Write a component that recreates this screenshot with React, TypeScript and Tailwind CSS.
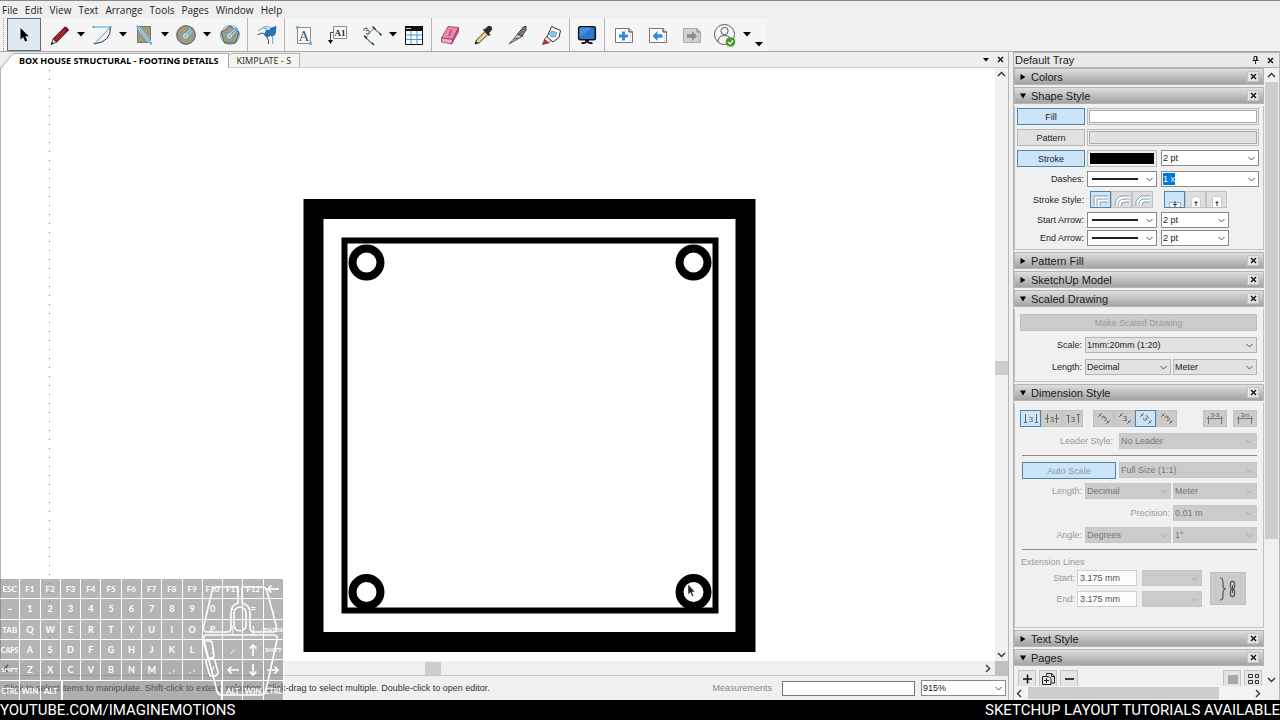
import React from 'react';
import clsx from 'clsx';

const menus = ['File', 'Edit', 'View', 'Text', 'Arrange', 'Tools', 'Pages', 'Window', 'Help'];

function Ico({ children, size = 26 }: { children: React.ReactNode; size?: number }) {
  return (
    <svg width={size} height={size} viewBox="0 0 26 26" fill="none" aria-hidden="true" className="shrink-0">
      {children}
    </svg>
  );
}

function Tool({ label, active, children }: { label: string; active?: boolean; children: React.ReactNode }) {
  return (
    <button
      aria-label={label}
      className={clsx(
        'flex w-[34px] shrink-0 items-center justify-center self-stretch',
        active && 'border border-[#5f6f7a] bg-[#dfe9f1]',
      )}
    >
      <Ico>{children}</Ico>
    </button>
  );
}

function Caret({ label }: { label: string }) {
  return (
    <button aria-label={label} className="flex w-2 shrink-0 items-center justify-center">
      <svg width="8" height="5" viewBox="0 0 8 5" aria-hidden="true">
        <path d="M0 0h8L4 4.6z" fill="#000" />
      </svg>
    </button>
  );
}

function Sep() {
  return <span className="w-px shrink-0 self-stretch bg-[#b4b4b4]" />;
}

function PageShape({ grey }: { grey?: boolean }) {
  return (
    <>
      <path d="M4.500 6.500h13.500l3.500 3.500v10.500h-17z" fill={grey ? '#d2d2d2' : '#fdfdfd'} stroke={grey ? '#aaa' : '#777'} />
      <path d="M18 6.500v3.500h3.500" stroke={grey ? '#888' : '#333'} fill={grey ? '#bbb' : '#eee'} />
      <path d="M19.500 12v7" stroke={grey ? '#aaa' : '#bbb'} strokeDasharray="1 1" />
    </>
  );
}

function CenterHandle() {
  return (
    <>
      <path d="M13 13.500l5.500-5.500" stroke="#d9f0ff" strokeWidth="2.600" />
      <path d="M13 13.500l6-6" stroke="#3f9ad4" strokeWidth="1.200" />
      <circle cx="12.500" cy="14" r="2" fill="#8fb4c4" stroke="#c9ecff" />
      <path d="M18.500 5.500h2v2h-2z" fill="#3f9ad4" />
    </>
  );
}

function Toolbar() {
  return (
    <div className="flex h-[34px] shrink-0 items-stretch border-b border-[#a6a6a6] bg-[#efefef]">
      <div className="flex items-stretch bg-[#f5f5f5] pl-[3px] pr-1">
        <span className="mr-[3px] w-px border-l border-dotted border-[#999]" />
        <Tool label="Select" active>
          <path d="M9.500 6v11.500l2.600-2.400 2 4.400 2.200-1-2-4.200h3.400z" fill="#000" />
        </Tool>
        <span className="w-0.5 shrink-0" />
        <Tool label="Line">
          <path d="M4 22.500l2.200-5.800 3.600 3.400z" fill="#e8cfa0" stroke="#333" strokeWidth=".8" />
          <path d="M6.200 16.700L17.800 5l3.600 3.200L9.800 20z" fill="#a8202e" stroke="#301014" strokeWidth=".9" />
          <path d="M16.500 6.400l3.500 3.300 1.800-1.600q-.6-3-3.600-3.500z" fill="#6b1a22" />
          <path d="M4 22.500l1-2.500 1.500 1.400z" fill="#111" />
        </Tool>
        <Caret label="Line options" />
        <Tool label="Arc">
          <path d="M4.500 5h17L6 21.500" stroke="#4aa5dc" />
          <path d="M21.500 5q.500 15-16 16.800" stroke="#333" />
          <path d="M3.500 4h2v2h-2zM20.500 4h2v2h-2zM4.500 20.500h2v2h-2z" fill="#4aa5dc" />
        </Tool>
        <Caret label="Arc options" />
        <Tool label="Rectangle">
          <path d="M6.500 4.500h13v16h-13z" fill="#9b9b87" stroke="#77776a" />
          <path d="M6.500 4.500l13.500 17" stroke="#d9f0ff" strokeWidth="2.600" />
          <path d="M6.500 4.500l13.500 17" stroke="#4aa5dc" strokeWidth="1.200" />
          <path d="M5.500 3.500h2v2h-2zM19 20.500h2v2h-2z" fill="#4aa5dc" />
        </Tool>
        <Caret label="Rectangle options" />
        <Tool label="Circle">
          <circle cx="13" cy="13" r="9.300" fill="#9b9b87" stroke="#55554c" />
          <CenterHandle />
        </Tool>
        <Caret label="Circle options" />
        <span className="w-0.5 shrink-0" />
        <Tool label="Polygon">
          <circle cx="13" cy="13" r="9.300" stroke="#4aa5dc" />
          <path d="M13 4l9 6.500-3.500 10.500h-11L4 10.500z" fill="#9b9b87" stroke="#55554c" />
          <CenterHandle />
        </Tool>
        <Sep />
        <span className="w-0.5 shrink-0" />
        <Tool label="Offset">
          <path d="M4 9q6-6 11 0t4 13M9 5q5-2 9 2" stroke="#4aa5dc" />
          <path d="M3.500 13q6-4 9 1t2 8" stroke="#444" />
          <path d="M10.500 13l2-5 2.500 1 1.500-2.500L22 4.500l-1 8-2.500 1.500-1.500-1-4 2z" fill="#2277c4" stroke="#134a80" strokeWidth=".7" />
        </Tool>
        <Sep />
        <span className="w-0.5 shrink-0" />
        <Tool label="Text">
          <path d="M6.500 5.500h13v16h-13z" stroke="#8a8a8a" fill="#fbfbfb" />
          <text x="13" y="19" textAnchor="middle" fontFamily="Liberation Serif, serif" fontSize="15" fill="#445866">A</text>
          <path d="M5 4h3v3H5zM18 20h3v3h-3z" fill="#6fb7e0" />
        </Tool>
        <Tool label="Label">
          <path d="M8.500 4.500h13v12h-13z" stroke="#8a8a8a" fill="#fbfbfb" />
          <text x="15" y="14" textAnchor="middle" fontFamily="Liberation Serif, serif" fontSize="9" fontWeight="bold" fill="#222">A1</text>
          <path d="M8 10.500H5.500V19" stroke="#444" />
          <path d="M3 18h5l-2.500 4z" fill="#111" />
        </Tool>
        <Tool label="Dimension">
          <path d="M6 15l7.500 7M14.500 6L22 12.500" stroke="#4b9e4b" strokeWidth="1.200" />
          <path d="M6.500 15.500l8.500-9.500" stroke="#666" strokeWidth=".8" />
          <path d="M5 13.500l3 3M13.500 4.500l3 3M13 21l2 2M20.500 11.500l2 2" stroke="#222" strokeWidth="1.200" />
          <text x="5" y="12" fontFamily="Liberation Sans, sans-serif" fontSize="10" fill="#444" transform="rotate(-42 8 9)">3</text>
        </Tool>
        <Caret label="Dimension options" />
        <Tool label="Table">
          <path d="M4.500 4.500h17v18h-17z" fill="#fff" stroke="#111" />
          <path d="M4 4h18v5H4z" fill="#111" />
          <path d="M5 6.500h5" stroke="#ccc" />
          <path d="M5 13h16M5 17.500h16M10 9v13M16 9v13" stroke="#3f9ae0" />
        </Tool>
        <Sep />
        <span className="w-px shrink-0" />
        <Tool label="Eraser">
          <path d="M11 4.500l10.500 1-5.500 12-11.500-1.500z" fill="#ee86b1" stroke="#8a3d5f" strokeWidth=".8" />
          <path d="M4.500 16l11.500 1.500-1.500 4.500L4.500 20z" fill="#f6a9ca" stroke="#8a3d5f" strokeWidth=".8" />
          <path d="M21.500 5.500v4.500l-7 12 1.500-4.500z" fill="#c85b8c" stroke="#8a3d5f" strokeWidth=".8" />
          <path d="M14.500 7.500l-2.500 6.500" stroke="#b34a7b" strokeWidth="1.500" />
        </Tool>
        <Tool label="Style">
          <path d="M4 22l1.500-4L14 9.500l3 3L8 21z" fill="#e9d27c" stroke="#333" strokeWidth=".9" />
          <path d="M4 22l1-3 2 2z" fill="#222" />
          <path d="M12 8l6 6 1.500-1.500-1.500-1.500 2.500-2.500q1.500-2.500-.300-4t-4 .3l-2.500 2.500-.700-.800z" fill="#2c2c2c" />
        </Tool>
        <Tool label="Split">
          <path d="M4 22L13 12l5 2z" fill="#c9c9c9" stroke="#444" strokeWidth=".9" />
          <path d="M12.500 12L19 4.500h2v3.500L17 14z" fill="#8a8a8a" stroke="#222" strokeWidth=".9" />
          <path d="M14.500 12.500l5-6.500M9 17l5-1" stroke="#444" strokeWidth=".8" />
        </Tool>
        <Tool label="Join">
          <path d="M12.500 4.500l9 4-1.500 7-6 4.500-6-5z" fill="#fafafa" stroke="#333" />
          <path d="M12.500 9l5 1.500-1 4-4 .500-2-2.500z" fill="#8cc8ea" stroke="#4787a8" strokeWidth=".7" />
          <path d="M7.500 14.500l4.500 4-2.500 2.500-4-3.500z" fill="#eee" stroke="#333" strokeWidth=".8" />
          <path d="M3.500 22.500l2-5 4 3.500z" fill="#c9302c" stroke="#611" strokeWidth=".6" />
        </Tool>
        <Sep />
        <Tool label="Start presentation">
          <path d="M11 18h4v2h3l1 2h-4.500v-1h-3v1H7l1-2h3z" fill="#1d1d1d" />
          <rect x="4.700" y="4.700" width="16.600" height="13" rx="1.500" fill="#2a78cf" stroke="#141414" strokeWidth="1.600" />
          <path d="M5.500 15.500L18 5.500H7Q5.500 5.500 5.500 7z" fill="#4391e2" />
        </Tool>
        <Sep />
        <span className="w-0.5 shrink-0" />
        <Tool label="Add page">
          <PageShape />
          <path d="M11 9.500h3v3h3v3h-3v3h-3v-3H8v-3h3z" fill="#2f8bdb" />
        </Tool>
        <Tool label="Previous page">
          <PageShape />
          <path d="M7.500 14l5-5v3.300h5v3.400h-5V19z" fill="#2f8bdb" />
        </Tool>
        <Tool label="Next page">
          <PageShape grey />
          <path d="M18 14l-5-5v3.300H8v3.400h5V19z" fill="#8b8b8b" />
        </Tool>
        <Tool label="Account">
          <circle cx="11.500" cy="12.500" r="10" stroke="#444" fill="#f8f8f8" strokeWidth=".9" />
          <circle cx="11.500" cy="9" r="3.600" stroke="#444" strokeWidth=".9" />
          <path d="M5 19.500q0-6 6.500-6t6.500 6" stroke="#444" strokeWidth=".9" />
          <circle cx="17.500" cy="20" r="4.800" fill="#4c9a2a" />
          <path d="M15.300 20.200l1.700 1.700 3-3.400" stroke="#fff" strokeWidth="1.300" />
        </Tool>
        <Caret label="Account options" />
        <span className="w-1 shrink-0" />
        <button aria-label="Toolbar options" className="flex w-2 items-end pb-1">
          <svg width="8" height="5" viewBox="0 0 8 5" aria-hidden="true"><path d="M0 0h8L4 4.600z" fill="#000" /></svg>
        </button>
      </div>
    </div>
  );
}

function Arrow({ dir, className }: { dir: 'up' | 'down' | 'left' | 'right'; className?: string }) {
  const d = { up: 'M1 6l3.500-3.500L8 6', down: 'M1 3l3.500 3.500L8 3', left: 'M6 1L2.500 4.500 6 8', right: 'M3 1l3.500 3.500L3 8' }[dir];
  return (
    <svg width="9" height="9" viewBox="0 0 9 9" fill="none" stroke="#333" strokeWidth="1.400" aria-hidden="true" className={className}>
      <path d={d} />
    </svg>
  );
}

function Cross() {
  return (
    <svg width="7" height="7" viewBox="0 0 7 7" stroke="#111" strokeWidth="1.400" aria-hidden="true">
      <path d="M1 1l5 5M6 1L1 6" />
    </svg>
  );
}

type Tone = 'white' | 'grey' | 'off';

function Pick({ label, value, tone = 'white', line, marked, id, className }: {
  label: string; value: string; tone?: Tone; line?: boolean; marked?: boolean; id?: string; className?: string;
}) {
  return (
    <span
      className={clsx(
        'relative flex h-4 items-center border',
        tone === 'white' && 'border-[#8a8a8a] bg-white text-[#222]',
        tone === 'grey' && 'border-[#b5b5b5] bg-[#e2e2e2] text-[#222]',
        tone === 'off' && 'border-[#c6c6c6] bg-[#cbcbcb] text-[#777]',
        className,
      )}
    >
      {marked && <span className="absolute inset-y-px left-px w-3 bg-[#0078d7]" />}
      <select
        id={id}
        aria-label={label}
        disabled={tone === 'off'}
        className={clsx('relative h-full w-full min-w-0 appearance-none bg-transparent pl-px pr-3 text-[9px] leading-3 opacity-100', marked && 'text-white')}
      >
        <option>{value}</option>
      </select>
      {line && <span className="pointer-events-none absolute left-1 right-[18px] top-1/2 h-0.5 -translate-y-1/2 bg-[#222]" />}
      <svg width="7" height="5" viewBox="0 0 7 5" fill="none" stroke={tone === 'off' ? '#aaa' : '#555'} aria-hidden="true" className="pointer-events-none absolute right-[3px]">
        <path d="M.5 1l3 3 3-3" />
      </svg>
    </span>
  );
}

function Head({ title, open }: { title: string; open?: boolean }) {
  return (
    <div className="mb-0.5 flex h-[17px] shrink-0 items-center border border-[#b4b4b4] bg-gradient-to-b from-[#dedede] to-[#a3a3a3] pl-[5px] pr-1">
      <button aria-expanded={!!open} className="flex flex-1 items-center gap-[5px] text-left text-[11px] leading-4 text-[#1b1b1b]">
        <svg width="6" height="6" viewBox="0 0 6 6" aria-hidden="true">
          <path d={open ? 'M0 .5h6l-3 5z' : 'M.5 0v6l5-3z'} fill="#000" />
        </svg>
        {title}
      </button>
      <button aria-label={'Close ' + title} className="flex h-[11px] w-3 items-center justify-center border border-[#c4c4c4] bg-[#e4e4e4]">
        <Cross />
      </button>
    </div>
  );
}

function Lab({ children, off, htmlFor, className }: { children: React.ReactNode; off?: boolean; htmlFor?: string; className?: string }) {
  return (
    <label htmlFor={htmlFor} className={clsx('shrink-0 pr-px text-right text-[9px] leading-3', off ? 'text-[#999]' : 'text-[#222]', className)}>
      {children}
    </label>
  );
}

function Toggle({ children, on }: { children: React.ReactNode; on?: boolean }) {
  return (
    <button
      aria-pressed={!!on}
      className={clsx('h-[17px] w-[68px] shrink-0 border text-[9px] leading-3 text-[#222]', on ? 'border-[#4c86ac] bg-[#cce4f7]' : 'border-[#b5b5b5] bg-[#e1e1e1]')}
    >
      {children}
    </button>
  );
}

function Mini({ label, on, off, wide, children }: { label: string; on?: boolean; off?: boolean; wide?: boolean; children: React.ReactNode }) {
  return (
    <button
      aria-label={label}
      aria-pressed={!!on}
      className={clsx(
        'flex h-[17px] shrink-0 items-center justify-center border',
        wide ? 'w-6' : 'w-[21px]',
        on ? 'border-[#4c86ac] bg-[#cce4f7]' : off ? 'border-[#c2c2c2] bg-[#cbcbcb]' : 'border-[#c2c2c2] bg-[#dedede]',
      )}
    >
      <svg width="18" height="15" viewBox="0 0 18 15" fill="none" aria-hidden="true">{children}</svg>
    </button>
  );
}

function JoinGlyph({ d1, d2, d3 }: { d1: string; d2: string; d3: string }) {
  return (
    <>
      <path d={d1 + 'v6H8v4z'} fill="#fff" />
      <path d={d1} stroke="#8d989f" />
      <path d={d2} stroke="#6f9fc2" />
      <path d={d3} stroke="#8d989f" />
    </>
  );
}

function DimGlyph({ kind }: { kind: number }) {
  const lines = ['M3.500 3v9M14.500 3v9M2 11.500h3M13 11.500h3', 'M4.500 3v9M13.500 3v9M2 7.500h4M12 7.500h4', 'M4.500 4v8M14.500 3v9M2.500 4.500h3M12.500 3.500h3'][kind];
  return (
    <>
      <path d={lines} stroke="#666" />
      <text x="9" y="10.500" textAnchor="middle" fontSize="8" fontFamily="Liberation Sans, sans-serif" fill="#555">3</text>
    </>
  );
}

function DiagGlyph({ turn }: { turn: string }) {
  return (
    <>
      <path d="M3 6l4-4M11 13l4-4M4 3l2 2M12 10l2 2" stroke="#777" />
      <text x="9" y="10" textAnchor="middle" fontSize="8" fontFamily="Liberation Sans, sans-serif" fill="#555" transform={turn}>3</text>
    </>
  );
}

function Body({ children, className }: { children: React.ReactNode; className?: string }) {
  return <div className={clsx('mb-0.5 shrink-0 border-x border-b border-[#c0c0c0] bg-[#f0f0f0]', className)}>{children}</div>;
}

function Tray() {
  return (
    <aside className="ml-1 flex w-[267px] shrink-0 flex-col border-x border-[#b5b5b5] bg-[#f0f0f0]">
      <div className="flex h-4 shrink-0 items-center border-y border-[#b0b0b0] bg-[#e8e8e8] pl-px pr-[5px]">
        <h2 className="flex-1 text-[11px] leading-4 text-[#222]">Default Tray</h2>
        <button aria-label="Pin tray" className="mr-2">
          <svg width="7" height="8" viewBox="0 0 7 8" fill="none" stroke="#222" aria-hidden="true"><path d="M2 .5h3v4M2 .5v4M.5 4.500h6M3.500 4.500V8M4.500 1v3" /></svg>
        </button>
        <button aria-label="Close tray"><Cross /></button>
      </div>
      <div className="flex min-h-0 flex-1">
        <div className="flex min-w-0 flex-1 flex-col">
          <div className="flex min-h-0 flex-1 flex-col overflow-hidden">
            <Head title="Colors" />
            <Head title="Shape Style" open />
            <Body className="flex flex-col gap-1 pb-[3px] pl-0.5 pr-1 pt-0.5">
              <div className="flex gap-0.5">
                <Toggle on>Fill</Toggle>
                <button aria-label="Fill color" className="h-[17px] flex-1 border border-[#bbb] bg-[#eee] p-px"><span className="block h-full border border-[#aaa] bg-white" /></button>
              </div>
              <div className="flex gap-0.5">
                <Toggle>Pattern</Toggle>
                <button aria-label="Pattern swatch" className="h-[17px] flex-1 border border-[#bbb] bg-[#eee] p-px"><span className="block h-full border border-[#aaa] bg-[#e1e1e1]" /></button>
              </div>
              <div className="flex gap-0.5">
                <Toggle on>Stroke</Toggle>
                <button aria-label="Stroke color" className="h-[17px] w-[70px] border border-[#bbb] bg-[#eee] p-0.5"><span className="block h-full bg-black" /></button>
                <Pick label="Stroke width" value="2 pt" className="ml-0.5 w-[98px]" />
              </div>
              <div className="flex items-center gap-0.5">
                <Lab htmlFor="dash" className="w-[68px]">Dashes:</Lab>
                <Pick id="dash" label="Dashes" value="" line className="w-[70px]" />
                <Pick label="Dash scale" value="1 x" marked className="ml-0.5 w-[98px]" />
              </div>
              <div className="flex items-center">
                <Lab className="mr-[5px] w-[68px]">Stroke Style:</Lab>
                <Mini label="Miter join" on><JoinGlyph d1="M2 14V4h14" d2="M5 14V7h11" d3="M8 14v-4h8" /></Mini>
                <Mini label="Round join"><JoinGlyph d1="M2 14Q2 4 10 4h6" d2="M5 14q0-7 6-7h5" d3="M8 14q0-4 4-4h4" /></Mini>
                <Mini label="Bevel join"><JoinGlyph d1="M2 14V9l5-5h9" d2="M5 14v-4l3-3h8" d3="M8 14v-2l2-2h6" /></Mini>
                <span className="w-[11px]" />
                <Mini label="Flat cap" on><path d="M3.500 15v-4.500h11V15" fill="#fff" stroke="#aaa" /><path d="M9 9v6M7 12.500h4" stroke="#345" /></Mini>
                <Mini label="Round cap"><path d="M4.500 15V9q0-4.500 4.500-4.500T13.500 9v6" fill="#fff" stroke="#ccc" /><path d="M9 9v5M7.500 10.500h3" stroke="#336" /></Mini>
                <Mini label="Square cap"><path d="M4.500 15V4.500h9V15" fill="#fff" stroke="#ccc" /><path d="M9 9v5M7.500 10.500h3" stroke="#336" /></Mini>
              </div>
              <div className="flex flex-col gap-0.5">
                <div className="flex items-center gap-0.5">
                  <Lab htmlFor="sa" className="w-[68px]">Start Arrow:</Lab>
                  <Pick id="sa" label="Start arrow" value="" line className="w-[70px]" />
                  <Pick label="Start arrow size" value="2 pt" className="ml-0.5 w-[68px]" />
                </div>
                <div className="flex items-center gap-0.5">
                  <Lab htmlFor="ea" className="w-[68px]">End Arrow:</Lab>
                  <Pick id="ea" label="End arrow" value="" line className="w-[70px]" />
                  <Pick label="End arrow size" value="2 pt" className="ml-0.5 w-[68px]" />
                </div>
              </div>
            </Body>
            <Head title="Pattern Fill" />
            <Head title="SketchUp Model" />
            <Head title="Scaled Drawing" open />
            <Body className="flex flex-col gap-1.5 pb-1.5 pl-[5px] pr-1.5 pt-[5px]">
              <button disabled className="h-[17px] border border-[#bdbdbd] bg-[#cbcbcb] text-[9px] leading-3 text-[#999]">Make Scaled Drawing</button>
              <div className="flex items-center gap-0.5">
                <Lab htmlFor="sc" className="w-[63px]">Scale:</Lab>
                <Pick id="sc" label="Scale" value="1mm:20mm (1:20)" tone="grey" className="flex-1" />
              </div>
              <div className="flex items-center gap-0.5">
                <Lab htmlFor="ln" className="w-[63px]">Length:</Lab>
                <Pick id="ln" label="Length format" value="Decimal" tone="grey" className="w-[86px]" />
                <Pick label="Length unit" value="Meter" tone="grey" className="flex-1" />
              </div>
            </Body>
            <Head title="Dimension Style" open />
            <Body className="flex flex-col gap-1.5 pb-5 pl-[5px] pr-1.5 pt-[7px]">
              <div className="flex items-center justify-between">
                <div className="flex">
                  <Mini label="Text centered" on off><DimGlyph kind={0} /></Mini>
                  <Mini label="Text above" off><DimGlyph kind={1} /></Mini>
                  <Mini label="Text outside" off><DimGlyph kind={2} /></Mini>
                </div>
                <div className="mr-4 flex">
                  <Mini label="Vertical text" off><DiagGlyph turn="rotate(-50 9 7)" /></Mini>
                  <Mini label="Horizontal text" off><DiagGlyph turn="rotate(0)" /></Mini>
                  <Mini label="Aligned text" on off><DiagGlyph turn="rotate(45 9 7)" /></Mini>
                  <Mini label="Perpendicular text" off><DiagGlyph turn="rotate(-35 9 7)" /></Mini>
                </div>
                <div className="flex gap-1.5">
                  <Mini label="Break leader" off wide><path d="M2.500 5v8M15.500 5v8M1 7.500h16" stroke="#777" /><text x="9" y="5.500" textAnchor="middle" fontSize="6" fontFamily="Liberation Sans, sans-serif" fill="#555">3-3</text></Mini>
                  <Mini label="Show units" off wide><path d="M2.500 5v8M15.500 5v8M1 7.500h16" stroke="#777" /><text x="9" y="5.500" textAnchor="middle" fontSize="6" fontFamily="Liberation Sans, sans-serif" fill="#555">3m</text></Mini>
                </div>
              </div>
              <div className="flex items-center gap-[5px]">
                <Lab off htmlFor="ld" className="w-[94px]">Leader Style:</Lab>
                <Pick id="ld" label="Leader style" value="No Leader" tone="off" className="flex-1" />
              </div>
              <div className="ml-0.5 border-t border-[#888]" />
              <div className="ml-0.5 flex gap-[3px]">
                <button className="h-[17px] w-[94px] border border-[#4c86ac] bg-[#cce4f7] text-[9px] leading-3 text-[#8b98a3]">Auto Scale</button>
                <Pick label="Auto scale ratio" value="Full Size (1:1)" tone="off" className="flex-1" />
              </div>
              <div className="-mt-0.5 flex items-center gap-0.5">
                <Lab off htmlFor="dl" className="w-[63px]">Length:</Lab>
                <Pick id="dl" label="Dimension length format" value="Decimal" tone="off" className="w-[86px]" />
                <Pick label="Dimension length unit" value="Meter" tone="off" className="flex-1" />
              </div>
              <div className="flex items-center gap-0.5">
                <Lab off htmlFor="pr" className="w-[151px]">Precision:</Lab>
                <Pick id="pr" label="Precision" value="0.01 m" tone="off" className="flex-1" />
              </div>
              <div className="flex items-center gap-0.5">
                <Lab off htmlFor="an" className="w-[63px]">Angle:</Lab>
                <Pick id="an" label="Angle format" value="Degrees" tone="off" className="w-[86px]" />
                <Pick label="Angle precision" value="1°" tone="off" className="flex-1" />
              </div>
              <div className="ml-0.5 border-t border-[#888]" />
              <div>
                <div className="pl-px text-[9px] leading-3 text-[#999]">Extension Lines</div>
                <div className="mt-0.5 flex items-center gap-2">
                  <div className="flex flex-col gap-[5px]">
                    {['Start:', 'End:'].map((l) => (
                      <div key={l} className="flex items-center">
                        <Lab off htmlFor={l} className="mr-px w-[56px]">{l}</Lab>
                        <input id={l} defaultValue="3.175 mm" className="mr-[5px] h-4 w-[60px] border border-[#d0d0d0] bg-[#fbfbfb] pl-0.5 text-[9px] leading-3 text-[#555]" />
                        <Pick label={l + ' extension'} value="" tone="off" className="w-[60px]" />
                      </div>
                    ))}
                  </div>
                  <button aria-label="Link extension lines" className="flex h-[33px] w-9 items-center justify-center border border-[#c0c0c0] bg-[#cbcbcb]">
                    <svg width="20" height="26" viewBox="0 0 20 26" fill="none" aria-hidden="true">
                      <path d="M2 2q3 0 3 4v3q0 4 3 4-3 0-3 4v3q0 4-3 4" stroke="#555" strokeWidth="1.200" />
                      <rect x="12.500" y="5.500" width="4" height="7" rx="1.500" stroke="#555" strokeWidth="1.300" />
                      <rect x="12.500" y="13.500" width="4" height="7" rx="1.500" stroke="#555" strokeWidth="1.300" />
                      <path d="M14.500 9v8" stroke="#555" />
                    </svg>
                  </button>
                </div>
              </div>
            </Body>
            <Head title="Text Style" />
            <Head title="Pages" open />
            <div className="flex shrink-0 gap-[3px] pl-1 pr-0.5 pt-0.5">
              {[
                ['Add', 'M3 8h9M7.500 3.500v9'],
                ['Duplicate', ''],
                ['Remove', 'M3 8h9'],
                ['List view', ''],
                ['Grid view', ''],
              ].map(([n, d], i) => (
                <button key={n} aria-label={n} className={clsx('flex h-[18px] w-[18px] items-center justify-center border border-[#c4c4c4] bg-[#e4e4e4]', i === 3 && 'ml-auto')}>
                  <svg width="15" height="16" viewBox="0 0 15 16" fill="none" aria-hidden="true">
                    {d && <path d={d} stroke="#111" strokeWidth="1.600" />}
                    {i === 1 && <path d="M5.500 4.500v-2h5l3 2.500v7h-3M1.500 5.500h6l2.500 2v6h-8.500zM5.500 7v5M3 9.500h5M10.500 2.500v3h3" fill="none" stroke="#222" />}
                    {i === 3 && <path d="M3 4h10v9H3z" fill="#a8a8a8" />}
                    {i === 4 && <path d="M2.500 3.500h4v3h-4zM9.500 3.500h3v3h-3zM2.500 9.500h4v3h-4zM9.500 9.500h3v3h-3z" stroke="#333" />}
                  </svg>
                </button>
              ))}
            </div>
          </div>
          <div className="flex h-3.5 shrink-0 items-center gap-1 bg-[#f3f3f3] pl-px pr-0.5">
            <Arrow dir="left" />
            <span className="h-3 flex-1 bg-[#cdcdcd]" />
            <Arrow dir="right" className="ml-[30px]" />
          </div>
        </div>
        <div className="flex w-[15px] shrink-0 flex-col items-center bg-[#f0f0f0] pb-4 pt-[3px]">
          <Arrow dir="up" />
          <span className="mt-0.5 w-[13px] flex-[457] bg-[#cdcdcd]" />
          <span className="flex-[136]" />
          <Arrow dir="down" />
        </div>
      </div>
    </aside>
  );
}

const keyRows: string[][] = [
  ['ESC', 'F1', 'F2', 'F3', 'F4', 'F5', 'F6', 'F7', 'F8', 'F9', 'F10', 'F11', 'F12', '←'],
  ['~', '1', '2', '3', '4', '5', '6', '7', '8', '9', '0', '-', '=', ','],
  ['TAB', 'Q', 'W', 'E', 'R', 'T', 'Y', 'U', 'I', 'O', 'P', '[', ']', 'ENTER'],
  ['CAPS', 'A', 'S', 'D', 'F', 'G', 'H', 'J', 'K', 'L', ';', ',·', '↑', 'SHIFT'],
  ['SHIFT', 'Z', 'X', 'C', 'V', 'B', 'N', 'M', ', ‹', '. ›', '/', '←', '↓', '→'],
  ['CTRL', 'WIN', 'ALT', '', 'ALT', 'WIN', 'CTRL'],
];

const arrowTurns: Record<string, string> = { '←': 'rotate(180 8 8)', '↑': 'rotate(-90 8 8)', '↓': 'rotate(90 8 8)', '→': 'rotate(0)' };

function KeyLabel({ k }: { k: string }) {
  if (arrowTurns[k]) {
    return (
      <svg width="16" height="16" viewBox="0 0 16 16" fill="none" stroke="#fff" strokeWidth="1.700" aria-hidden="true">
        <path d="M2 8h11M9.500 4.500L13 8l-3.500 3.500" transform={arrowTurns[k]} />
      </svg>
    );
  }
  return <span className={k.length > 4 ? 'text-[6px]' : k.length > 3 ? 'text-[7px]' : k.length === 1 ? 'text-[9px]' : 'text-[8px]'}>{k}</span>;
}

function Keyboard() {
  return (
    <div className="pointer-events-none absolute bottom-0 left-0 w-[284px] overflow-hidden font-['Lato',sans-serif] font-bold leading-3 text-white">
      <div className="grid grid-cols-14 grid-rows-[20px_21px_20px_20px_21px_19px]">
        {keyRows.flatMap((row, r) =>
          row.map((k, c) => (
            <span
              key={r + '-' + c}
              className={clsx(
                'flex items-center justify-center overflow-hidden border-white bg-[#6b6b6b]/50',
                k === '' ? 'col-span-8 border-x-2' : r < 5 ? 'border-b border-r' : c < 2 || c > 3 ? 'border-r' : '',
              )}
            >
              <KeyLabel k={k} />
            </span>
          )),
        )}
      </div>
      <svg width="78" height="116" viewBox="0 0 78 116" fill="none" stroke="#fff" strokeWidth="1.600" aria-hidden="true" className="absolute right-1 top-1.5">
        <path d="M36 2H15Q11 2 10 6L2 40q-2 7 3 7h20q4 0 4-5V28q0-8 7-10z" />
        <path d="M40 2h19q5 0 6 4l9 34q2 7-3 7H52q-4 0-4-5V28q0-8-8-10z" />
        <rect x="32" y="22" width="12" height="24" rx="6" />
        <path d="M4 50h68q4 0 3 5l-11 50q-1 5-6 5H20q-4 0-5-4L2 56q-1-6 2-6z" />
        <path d="M3 56h5q2 0 2 2l2 12q0 3-3 3H7q-2 0-2-3L2 59q-1-3 1-3zM6 74h5q2 0 2 2l3 11q0 4-4 4H9q-1 0-2-3L4 77q0-3 2-3z" />
      </svg>
    </div>
  );
}

function Workspace() {
  return (
    <main className="relative flex min-w-0 flex-1 flex-col border-r border-[#b5b5b5]">
      <div className="flex h-4 shrink-0 items-stretch border-b border-[#cfcfcf] bg-[#eeeeee]">
        <svg width="16" height="16" viewBox="0 0 16 16" aria-hidden="true" className="shrink-0">
          <path d="M1 16L12 2.500Q13 1.500 16 1.500V16z" fill="#fff" />
          <path d="M1 16L12 2.500Q13 1.500 16 1.500" fill="none" stroke="#aaa" />
        </svg>
        <button className="-mb-px mt-px border-r border-t border-[#aaa] bg-white pl-[3px] pr-[9px] font-['Noto_Sans',sans-serif] text-[9px] font-bold leading-3 text-black">
          BOX HOUSE STRUCTURAL - FOOTING DETAILS
        </button>
        <button className="mt-px rounded-tl-sm border-r border-t border-[#b3b3a6] bg-[#f5f5ee] px-2 font-['Noto_Sans',sans-serif] text-[9px] leading-3 text-[#333]">
          KIMPLATE - S
        </button>
        <span className="flex-1" />
        <button aria-label="List documents" className="mr-2"><svg width="6" height="4" viewBox="0 0 6 4" aria-hidden="true"><path d="M0 0h6L3 3.500z" /></svg></button>
        <button aria-label="Close document" className="mr-1"><Cross /></button>
      </div>
      <div className="flex min-h-0 flex-1 border-l border-[#b5b5b5]">
        <div className="relative min-w-0 flex-1 bg-white">
          <svg className="absolute inset-0 h-full w-full" fill="none" aria-label="Footing section">
            <path d="M48.500 2V593" stroke="#777" strokeDasharray="1 8" />
            <rect x="312.500" y="141" width="432" height="433" stroke="#000" strokeWidth="20" />
            <rect x="343.500" y="172.500" width="371" height="370" stroke="#000" strokeWidth="6" />
            {[[365.5, 194.5], [692.5, 194.5], [365.5, 524], [692.5, 524]].map(([x, y]) => (
              <circle key={x + '-' + y} cx={x} cy={y} r="14" stroke="#000" strokeWidth="8" fill="#fff" />
            ))}
            <path d="M687 516v10.500l2.300-2 1.700 4 1.700-.8-1.700-3.700h3z" fill="#222" stroke="#fff" strokeWidth=".5" />
          </svg>
        </div>
        <div className="flex w-[13px] shrink-0 flex-col items-center bg-[#f0f0f0] pt-0.5">
          <Arrow dir="up" />
          <span className="flex-[284]" />
          <span className="h-3.5 w-full bg-[#cdcdcd]" />
          <span className="flex-[276]" />
          <Arrow dir="down" className="mb-0.5" />
        </div>
      </div>
      <div className="flex h-3.5 shrink-0 items-center bg-[#f0f0f0] pl-0.5">
        <Arrow dir="left" />
        <span className="flex-[414]" />
        <span className="h-[13px] w-4 bg-[#cdcdcd]" />
        <span className="flex-[543]" />
        <Arrow dir="right" />
        <span className="ml-[3px] h-3.5 w-[13px] bg-[#c0c0c0]" />
      </div>
      <div className="flex h-[25px] shrink-0 items-center border-t border-[#c4c4c4] bg-[#f0f0f0] pl-1 pr-0.5">
        <span className="flex-1 text-[9px] leading-3 text-[#333]">
          Click to select items to manipulate. Shift-click to extend selection. Click-drag to select multiple. Double-click to open editor.
        </span>
        <label htmlFor="meas" className="mr-2.5 text-[9px] leading-3 text-[#888]">Measurements</label>
        <input id="meas" className="mr-1.5 h-[15px] w-[133px] border border-[#777] bg-white" />
        <Pick label="Zoom" value="915%" className="w-[85px]" />
      </div>
      <Keyboard />
    </main>
  );
}

export default function App() {
  return (
    <div className="flex h-screen flex-col overflow-hidden bg-[#f0f0f0] font-['Liberation_Sans',Arial,sans-serif] text-[#222]">
      <nav className="flex h-[18px] shrink-0 items-center gap-[7px] border-t border-[#888] bg-[#efefef] pl-0.5 font-['Open_Sans',sans-serif] text-[10px] leading-4">
        {menus.map((m) => (
          <button key={m}>{m}</button>
        ))}
      </nav>
      <Toolbar />
      <div className="flex min-h-0 flex-1">
        <Workspace />
        <Tray />
      </div>
      <footer className="flex h-5 shrink-0 items-center justify-between overflow-hidden whitespace-nowrap bg-black font-['Roboto',sans-serif] text-[15px] font-normal leading-5 text-white">
        <span>YOUTUBE.COM/IMAGINEMOTIONS</span>
        <span>SKETCHUP LAYOUT TUTORIALS AVAILABLE</span>
      </footer>
    </div>
  );
}
